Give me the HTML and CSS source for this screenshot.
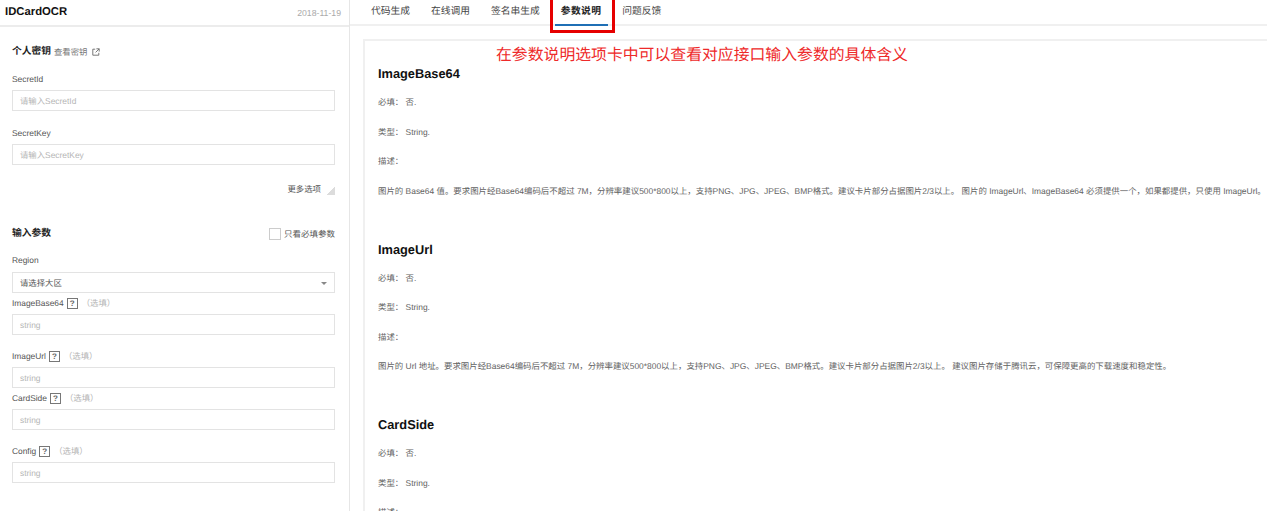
FILE: index.html
```html
<!DOCTYPE html>
<html lang="zh-CN">
<head>
<meta charset="utf-8">
<title>IDCardOCR</title>
<link rel="stylesheet" href="styles.css">
</head>
<body>
<div class="app">
  <aside class="side">
    <header class="side-head">
      <h1 class="title">IDCardOCR</h1>
      <span class="date">2018-11-19</span>
    </header>
    <div class="side-body">
      <div class="key-head">
        <strong class="sec-title">个人密钥</strong>
        <span class="key-link">查看密钥</span>
        <svg class="ext" viewBox="0 0 10 10" width="8" height="8" aria-hidden="true"><path d="M4 1.5H1v7.500h7.500V6M5.500 1H9v3.500M9 1 4.500 5.500" fill="none" stroke="#666" stroke-width="1.100"/></svg>
      </div>
      <div class="lbl lbl-first">SecretId</div>
      <div class="box ph">请输入SecretId</div>
      <div class="lbl lbl-key">SecretKey</div>
      <div class="box ph">请输入SecretKey</div>
      <div class="more"><span>更多选项</span><i class="corner"></i></div>
      <div class="input-head">
        <strong class="sec-title">输入参数</strong>
        <label class="only"><i class="check"></i>只看必填参数</label>
      </div>
      <div class="lbl lbl-region">Region</div>
      <div class="box select">请选择大区<i class="arrow"></i></div>
      <div class="lbl lbl-a">ImageBase64<span class="q">?</span><span class="opt">（选填）</span></div>
      <div class="box ph">string</div>
      <div class="lbl lbl-b">ImageUrl<span class="q">?</span><span class="opt">（选填）</span></div>
      <div class="box ph">string</div>
      <div class="lbl lbl-a">CardSide<span class="q">?</span><span class="opt">（选填）</span></div>
      <div class="box ph">string</div>
      <div class="lbl lbl-b">Config<span class="q">?</span><span class="opt">（选填）</span></div>
      <div class="box ph">string</div>
    </div>
  </aside>
  <main class="main">
    <nav class="tabs">
      <span class="tab">代码生成</span>
      <span class="tab">在线调用</span>
      <span class="tab">签名串生成</span>
      <span class="tab active">参数说明</span>
      <span class="tab">问题反馈</span>
    </nav>
    <div class="red-box"></div>
    <div class="note">在参数说明选项卡中可以查看对应接口输入参数的具体含义</div>
    <section class="card">
      <article class="param">
        <h2>ImageBase64</h2>
        <p>必填：&nbsp;否.</p>
        <p>类型：&nbsp;String.</p>
        <p>描述：</p>
        <p class="desc">图片的 Base64 值。要求图片经Base64编码后不超过 7M，分辨率建议500*800以上，支持PNG、JPG、JPEG、BMP格式。建议卡片部分占据图片2/3以上。 图片的 ImageUrl、ImageBase64 必须提供一个，如果都提供，只使用 ImageUrl。</p>
      </article>
      <article class="param">
        <h2>ImageUrl</h2>
        <p>必填：&nbsp;否.</p>
        <p>类型：&nbsp;String.</p>
        <p>描述：</p>
        <p class="desc">图片的 Url 地址。要求图片经Base64编码后不超过 7M，分辨率建议500*800以上，支持PNG、JPG、JPEG、BMP格式。建议卡片部分占据图片2/3以上。 建议图片存储于腾讯云，可保障更高的下载速度和稳定性。</p>
      </article>
      <article class="param">
        <h2>CardSide</h2>
        <p>必填：&nbsp;否.</p>
        <p>类型：&nbsp;String.</p>
        <p>描述：</p>
      </article>
    </section>
  </main>
</div>
</body>
</html>
```
FILE: styles.css
```css
* { box-sizing: border-box; }
html, body { margin: 0; height: 511px; overflow: hidden; background: #fff; }
body { font-family: "Liberation Sans", "Noto Sans CJK SC", sans-serif; color: #444; font-size: 8.4px; text-rendering: geometricPrecision; }
.app { display: flex; height: 511px; overflow: hidden; }

.side { width: 350px; flex: none; border-right: 1px solid #e6e6e6; height: 511px; }
.side-head { height: 27px; border-bottom: 2px solid #ececec; display: flex; justify-content: space-between; padding: 5px 8px 0 5px; }
.title { margin: 0; font-size: 11.3px; line-height: 14px; font-weight: 700; color: #111; }
.date { font-size: 8.7px; line-height: 11px; color: #aaa; padding-top: 3px; }
.side-body { padding: 0 14px 0 12px; }

.key-head { display: flex; align-items: center; height: 14px; margin-top: 18px; }
.sec-title { font-size: 9.75px; font-weight: 700; color: #222; line-height: 14px; }
.key-link { font-size: 8.4px; color: #777; margin-left: 3px; }
.ext { margin-left: 4px; }

.lbl { font-size: 8.4px; line-height: 12px; color: #555; display: flex; align-items: center; }
.lbl-first { margin-top: 14px; margin-bottom: 5px; }
.lbl-key { margin-top: 16px; margin-bottom: 5px; }
.lbl-region { margin-top: 13.500px; margin-bottom: 5.500px; }
.lbl-a { margin-top: 4.500px; margin-bottom: 4.500px; }
.lbl-b { margin-top: 15.500px; margin-bottom: 4.500px; }

.box { height: 21px; border: 1px solid #e3e3e3; font-size: 8.4px; line-height: 21px; padding: 0 7px; background: #fff; position: relative; }
.ph { color: #b5b5b5; }
.select { color: #555; }
.arrow { position: absolute; right: 7px; top: 9px; border: 3px solid transparent; border-top: 3.500px solid #888; border-bottom: 0; }

.more { display: flex; justify-content: flex-end; align-items: center; height: 14px; margin-top: 17px; font-size: 8.4px; color: #555; }
.corner { width: 8px; height: 9px; margin-left: 6px; margin-top: 3px; background: linear-gradient(to bottom right, transparent 50%, #dcdcdc 50%); }

.input-head { display: flex; justify-content: space-between; align-items: center; height: 14px; margin-top: 30.500px; }
.only { display: flex; align-items: center; font-size: 8.5px; color: #555; }
.check { width: 12px; height: 12px; border: 1px solid #ccc; margin-right: 3px; }

.q { width: 11px; height: 11px; border: 1px solid #777; margin-left: 3px; font-size: 8px; line-height: 10px; text-align: center; font-weight: 700; color: #666; }
.opt { margin-left: 4px; color: #b5b5b5; }

.main { flex: 1; min-width: 0; position: relative; height: 511px; overflow: hidden; }
.tabs { height: 26px; border-bottom: 2px solid #f0f0f0; display: flex; padding-left: 21px; gap: 21px; font-size: 9.75px; color: #444; }
.tab { line-height: 24px; white-space: nowrap; }
.tab.active { font-weight: 700; color: #222; letter-spacing: 0.400px; }
.red-box { position: absolute; left: 200px; top: 0; width: 65px; height: 33px; border: 3px solid #e60000; border-top: 0; }
.red-box::after { content: ""; position: absolute; left: 2px; right: 4px; top: 24px; height: 1.500px; background: #1f6fb5; }
.note { position: absolute; left: 146px; top: 46px; font-family: "Liberation Serif", "Noto Sans CJK SC", serif; font-size: 15.850px; line-height: 20px; color: #ee2a2a; white-space: nowrap; z-index: 1; }

.card { margin: 13px 0 0 13px; border-top: 2px solid #f0f0f0; border-left: 2px solid #f0f0f0; padding: 26px 0 0 13px; height: 480px; overflow: hidden; }
.param { height: 175.600px; }
.param h2 { margin: 0 0 15px; font-size: 12.8px; line-height: 14px; font-weight: 700; color: #111; }
.param p { margin: 0 0 17.500px; font-size: 8.44px; line-height: 12px; color: #626262; white-space: nowrap; }
```
